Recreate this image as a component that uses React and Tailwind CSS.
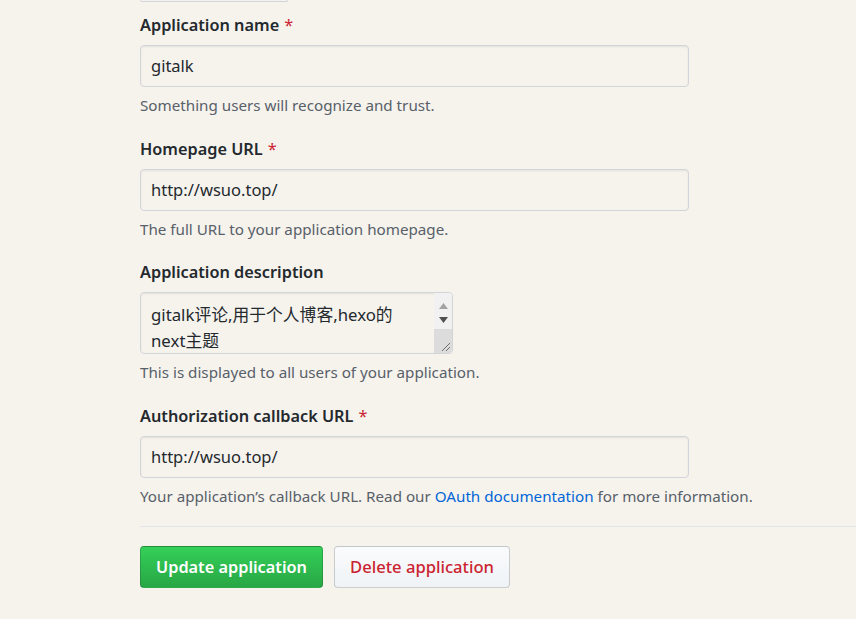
import React from "react";

const font = { fontFamily: '"Noto Sans", "Noto Sans CJK SC", sans-serif' };

function Label({ children, required }) {
  return (
    <div className="text-[16.3px] font-semibold leading-[24px] text-[#24292e]">
      {children}
      {required && <span className="ml-[5px] font-normal text-[#cb2431]">*</span>}
    </div>
  );
}

function Input({ value }) {
  return (
    <div className="mt-[8px] flex h-[42px] w-[549px] items-center rounded-[4px] border border-[#d1d5da] bg-[#f6f3ed] px-[10px] text-[16.5px] text-[#24292e] shadow-[inset_0_1px_2px_rgba(27,31,35,0.075)]">
      {value}
    </div>
  );
}

function Help({ children }) {
  return <div className="mt-[8px] text-[15.2px] leading-[20px] text-[#586069]">{children}</div>;
}

export default function App() {
  return (
    <div className="min-h-[619px] w-[856px] overflow-hidden bg-[#f6f3ed] pl-[140px]" style={font}>
      <div className="h-[2px] w-[148px] rounded-b-[4px] border-b border-x border-[#d1d5da] bg-[#f4f2ee]" />
      <div className="pt-[11px]">
        <Label required>Application name</Label>
        <Input value="gitalk" />
        <Help>Something users will recognize and trust.</Help>
      </div>
      <div className="pt-[22px]">
        <Label required>Homepage URL</Label>
        <Input value="http://wsuo.top/" />
        <Help>The full URL to your application homepage.</Help>
      </div>
      <div className="pt-[21px]">
        <Label>Application description</Label>
        <div className="mt-[8px] flex h-[62px] w-[313px] overflow-hidden rounded-[4px] border border-[#d1d5da] bg-[#f6f3ed] shadow-[inset_0_1px_2px_rgba(27,31,35,0.075)]">
          <div className="flex-1 px-[10px] pt-[9px] text-[16.8px] leading-[26px] text-[#24292e]">
            gitalk评论,用于个人博客,hexo的
            <br />
            next主题
          </div>
          <div className="flex w-[18px] flex-col bg-[#f1f1f1]">
            <div className="flex h-[19px] items-end justify-center pb-[3px]">
              <svg width="9" height="6" viewBox="0 0 9 6"><path d="M4.5 0L9 6H0z" fill="#a3a3a3" /></svg>
            </div>
            <div className="flex h-[17px] items-start justify-center pt-[5px]">
              <svg width="9" height="6" viewBox="0 0 9 6"><path d="M0 0h9L4.5 6z" fill="#505050" /></svg>
            </div>
            <div className="relative flex-1 bg-[#dcdcdc]">
              <svg className="absolute bottom-[1px] right-[1px]" width="12" height="12" viewBox="0 0 12 12">
                <path d="M11 3L3 11M11 7L7 11" stroke="#6e6e6e" strokeWidth="1" />
              </svg>
            </div>
          </div>
        </div>
        <Help>This is displayed to all users of your application.</Help>
      </div>
      <div className="pt-[22px]">
        <Label required>Authorization callback URL</Label>
        <Input value="http://wsuo.top/" />
        <Help>
          Your application’s callback URL. Read our{" "}
          <span className="text-[#0366d6]">OAuth documentation</span> for more information.
        </Help>
      </div>
      <div className="mt-[20px] h-px bg-[#e1e4e8]" />
      <div className="mt-[19px] flex gap-[11px]">
        <div className="flex h-[42px] w-[183px] items-center justify-center rounded-[4px] border border-[rgba(27,31,35,0.2)] bg-gradient-to-b from-[#34d058] to-[#28a745] text-[16.3px] font-semibold text-white">
          Update application
        </div>
        <div className="flex h-[42px] w-[176px] items-center justify-center rounded-[4px] border border-[rgba(27,31,35,0.2)] bg-gradient-to-b from-[#fafbfc] to-[#eff3f6] text-[16.6px] font-medium text-[#cb2431]">
          Delete application
        </div>
      </div>
    </div>
  );
}
